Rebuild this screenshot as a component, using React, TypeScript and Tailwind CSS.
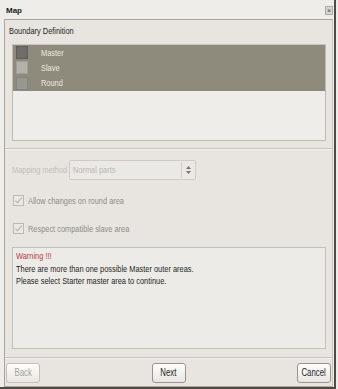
import React from "react";

const rows = [
  { name: "Master", swatch: "bg-[#6f6d67] border-[#5f5d57]" },
  { name: "Slave", swatch: "bg-[#b4b1ab] border-[#a19e98]" },
  { name: "Round", swatch: "bg-[#989690] border-[#86847e]" },
];

// the dialog font is a narrow one; squeeze Liberation Sans to match
function N({ children, className = "", center }: { children: React.ReactNode; className?: string; center?: boolean }) {
  return (
    <span
      className={
        "inline-block whitespace-nowrap scale-x-[0.78] " + (center ? "origin-center " : "origin-left ") + className
      }
    >
      {children}
    </span>
  );
}

function Check() {
  return (
    <div className="w-[11px] h-[11px] border border-[#bcb9b3] bg-[#ebe8e3] flex items-center justify-center">
      <svg width="9" height="9" viewBox="0 0 9 9">
        <path d="M1.5 4.5 L3.5 6.8 L7.8 1.5" fill="none" stroke="#b4b1ab" strokeWidth="1.1" />
      </svg>
    </div>
  );
}

function Button({ label, disabled }: { label: string; disabled?: boolean }) {
  return (
    <div
      className={
        "h-[20px] w-[34px] rounded-[3px] border flex items-center justify-center text-[10px] bg-gradient-to-b from-[#fefefd] to-[#e8e6e1] " +
        (disabled ? "border-[#c4c1bb] text-[#a3a09a]" : "border-[#98958f] text-[#1e1e1e]")
      }
    >
      <N center>{label}</N>
    </div>
  );
}

export default function App() {
  return (
    <div className="w-[338px] h-[389px] bg-[#efede9] flex flex-col overflow-hidden font-['Liberation_Sans',sans-serif] text-[9.5px] leading-[12px]">
      <div className="flex h-[387px]">
        <div className="w-[334px] flex flex-col">
          {/* title */}
          <div className="h-[19px] flex items-start justify-between pl-[6px] pr-[1px] pt-[6px]">
            <span className="font-bold text-[8px] leading-[9px] text-[#1a1a1a]">Map</span>
            <div className="w-[8px] h-[9px] bg-[#d8d5cf] border border-[#aeaba5] flex items-center justify-center text-[7px] leading-[7px] text-[#444]">
              ×
            </div>
          </div>

          {/* panel */}
          <div className="ml-[4px] w-[329px] h-[368px] border border-[#a9a6a0] border-r-[#c9c6c0] bg-[#e8e5e0] flex flex-col">
            <div className="mt-[5px] pl-[4px] h-[12px] text-[#1e1e1e]">
              <N>Boundary Definition</N>
            </div>

            <div className="mt-[7px] ml-[7px] w-[314px] h-[97px] border border-[#bdbab4] border-t-[#c9c6bf] bg-[#efedea] flex flex-col">
              {rows.map((r, i) => (
                <div
                  key={r.name}
                  className={"flex items-center bg-[#8e8b7c] " + (i === 2 ? "h-[16px]" : "h-[15px]")}
                >
                  <div className={"ml-[3px] w-[12px] h-[13px] border " + r.swatch}></div>
                  <N className="ml-[13px] text-[#ebe9e1]">{r.name}</N>
                </div>
              ))}
            </div>

            <div className="mt-[7px] h-[2px] border-t border-[#c6c3bd] border-b border-b-[#f3f1ee]"></div>

            <div className="mt-[10px] h-[20px] flex items-center pl-[7px]">
              <div className="w-[57px] text-[#c1beb8]">
                <N>Mapping method</N>
              </div>
              <div className="w-[127px] h-[20px] rounded-[2px] border border-[#cfccc6] bg-[#ebe9e5] flex items-center">
                <div className="flex-1 pl-[3px] text-[#bab7b1]">
                  <N>Normal parts</N>
                </div>
                <div className="w-[1px] h-[16px] bg-[#d3d0ca]"></div>
                <div className="w-[13px] flex flex-col items-center gap-[2px]">
                  <svg width="5" height="3" viewBox="0 0 5 3">
                    <path d="M0 3 L2.5 0 L5 3 Z" fill="#777570" />
                  </svg>
                  <svg width="5" height="3" viewBox="0 0 5 3">
                    <path d="M0 0 L2.5 3 L5 0 Z" fill="#777570" />
                  </svg>
                </div>
              </div>
            </div>

            <div className="mt-[15px] h-[11px] flex items-center pl-[8px]">
              <Check />
              <N className="ml-[4px] text-[#8e8c86]">Allow changes on round area</N>
            </div>

            <div className="mt-[17px] h-[11px] flex items-center pl-[8px]">
              <Check />
              <N className="ml-[4px] text-[#8e8c86]">Respect compatible slave area</N>
            </div>

            <div className="mt-[13px] ml-[7px] w-[314px] h-[102px] border border-[#c3c0ba] bg-[#edebe7] pl-[3px] pt-[2px] leading-[12.5px] text-[#1e1e1e] flex flex-col items-start">
              <N className="text-[#b2403e]">Warning !!!</N>
              <N>There are more than one possible Master outer areas.</N>
              <N>Please select Starter master area to continue.</N>
            </div>

            <div className="mt-[8px] h-[2px] border-t border-[#c6c3bd] border-b border-b-[#f3f1ee]"></div>

            <div className="mt-[4px] flex justify-between px-[1px]">
              <Button label="Back" disabled />
              <Button label="Next" />
              <Button label="Cancel" />
            </div>
          </div>
        </div>
        <div className="w-[2px] bg-[#4f4a43]"></div>
        <div className="w-[2px] bg-[#efede9]"></div>
      </div>
      <div className="w-[336px] h-[2px] bg-[#4f4a43]"></div>
    </div>
  );
}
